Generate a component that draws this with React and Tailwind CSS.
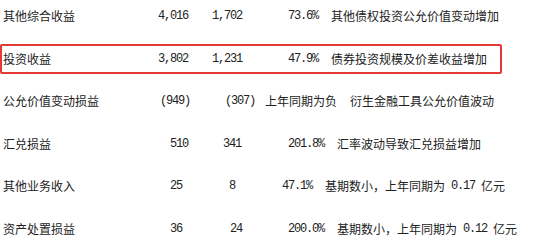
import React from 'react';

const cjk = "font-['Noto_Sans_CJK_SC','Noto_Sans',sans-serif]";
const mono = "font-['Liberation_Mono','Noto_Sans_CJK_SC',monospace] text-[12px] tracking-[-1.2px]";

const rows = [
    { label: '其他综合收益', a: '4,016', aPad: 'pl-0', b: '1,702', bPad: 'pl-0', pct: '73.6%', pctPad: 'pl-[23px]', note: [['t', '其他债权投资公允价值变动增加']] },
    { label: '投资收益', a: '3,802', aPad: 'pl-0', b: '1,231', bPad: 'pl-0', pct: '47.9%', pctPad: 'pl-[23px]', note: [['t', '债券投资规模及价差收益增加']], boxed: true },
    { label: '公允价值变动损益', a: '(949)', aPad: 'pl-[2px]', b: '(307)', bPad: 'pl-[13px]', pct: null, pctPad: 'pl-0', lead: '上年同期为负', note: [['t', '衍生金融工具公允价值波动']] },
    { label: '汇兑损益', a: '510', aPad: 'pl-[12px]', b: '341', bPad: 'pl-[11px]', pct: '201.8%', pctPad: 'pl-[23px]', note: [['t', '汇率波动导致汇兑损益增加']] },
    { label: '其他业务收入', a: '25', aPad: 'pl-[12px]', b: '8', bPad: 'pl-[17px]', pct: '47.1%', pctPad: 'pl-[17px]', note: [['t', '基期数小，上年同期为'], ['m', ' 0.17 '], ['t', '亿元']] },
    { label: '资产处置损益', a: '36', aPad: 'pl-[12px]', b: '24', bPad: 'pl-[18px]', pct: '200.0%', pctPad: 'pl-[23px]', note: [['t', '基期数小，上年同期为'], ['m', ' 0.12 '], ['t', '亿元']] },
];

const Row = ({ row }) => (
    <div className="flex items-center h-[16px] leading-[16px] whitespace-pre">
        <div className={`w-[155px] text-[12px] ${cjk}`}>{row.label}</div>
        <div className={`w-[54px] ${row.aPad} ${mono}`}>{row.a}</div>
        <div className={`w-[53px] ${row.bPad} ${mono}`}>{row.b}</div>
        <div className={`flex items-center gap-[13px] ${row.pctPad}`}>
            {row.pct ? (
                <span className={mono}>{row.pct}</span>
            ) : (
                <span className={`text-[12px] ${cjk}`}>{row.lead}</span>
            )}
            <span className="flex items-center">
                {row.note.map(([kind, text], i) => (
                    <span key={i} className={kind === 'm' ? mono : `text-[12px] ${cjk}`}>
                        {text}
                    </span>
                ))}
            </span>
        </div>
    </div>
);

export default function App() {
    return (
        <div className="w-[550px] h-[247px] bg-white text-[#222] overflow-hidden">
            <div className="flex flex-col gap-[26.5px] pt-[8px]">
                {rows.map((row, i) =>
                    row.boxed ? (
                        <div
                            key={i}
                            className="w-[502px] -my-[7px] py-[5px] pl-[1px] border-2 border-[#e53935] rounded-[2px]"
                        >
                            <Row row={row} />
                        </div>
                    ) : (
                        <div key={i} className="pl-[3px]">
                            <Row row={row} />
                        </div>
                    )
                )}
            </div>
        </div>
    );
}
